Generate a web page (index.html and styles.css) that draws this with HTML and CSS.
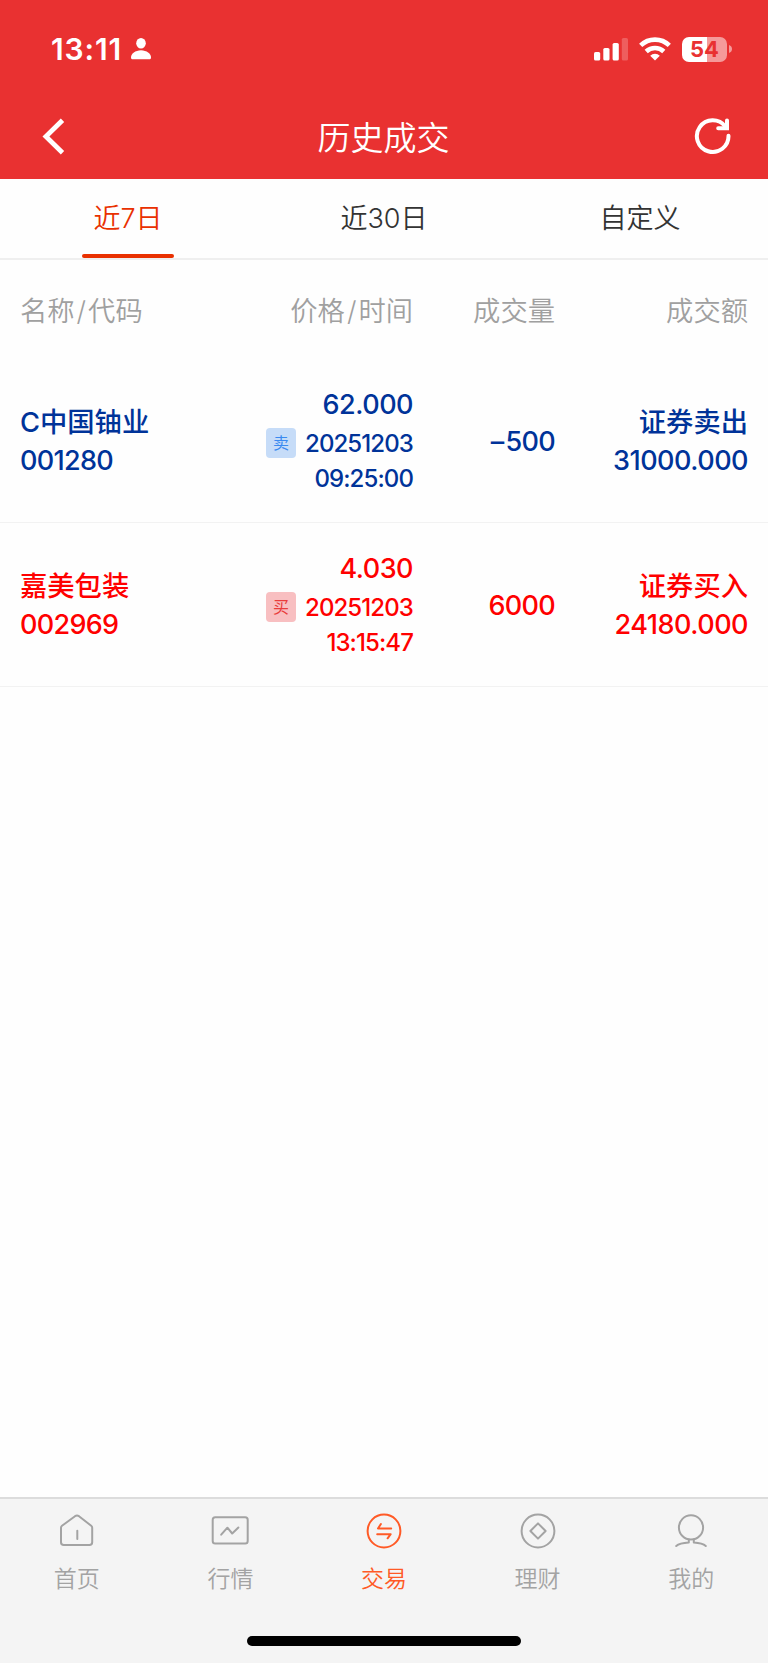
FILE: index.html
```html
<!DOCTYPE html>
<html lang="zh-CN">
<head>
    <meta charset="UTF-8">
    <meta name="viewport" content="width=device-width, initial-scale=1.0">
    <title>历史成交</title>
    <link rel="stylesheet" href="styles.css">
</head>
<body>

    <!-- 顶部 -->
    <header class="header">
        <div class="status-bar">
            <div class="status-left">
                <span class="time">13:11</span>
                <svg class="icon-person" width="20" height="22" viewBox="0 0 20 22" fill="#fff">
                    <ellipse cx="10" cy="5.3" rx="4.8" ry="5.3"/>
                    <path d="M2 21.3C.7 21.3 0 20.7 0 19.4C0 16 4.3 12.3 10 12.3S20 16 20 19.4C20 20.7 19.3 21.3 18 21.3Z"/>
                </svg>
            </div>
            <div class="status-right">
                <svg width="34" height="23" viewBox="0 0 34 23" fill="#fff">
                    <rect x="0" y="14" width="6.2" height="8.5" rx="1.6"/>
                    <rect x="9.3" y="10" width="6.2" height="12.5" rx="1.6"/>
                    <rect x="18.6" y="5" width="6.2" height="17.5" rx="1.6"/>
                    <rect x="27.8" y="0" width="6.2" height="22.5" rx="1.6" opacity=".22"/>
                </svg>
                <svg width="32" height="24" viewBox="0 0 32 24" fill="none" stroke="#fff" stroke-width="4.6">
                    <path d="M1.7 8.4A20.5 20.5 0 0 1 30.3 8.4"/>
                    <path d="M7.2 14.5A12.8 12.8 0 0 1 24.8 14.5"/>
                    <path d="M16 23.5L11.2 18.8A6.8 6.8 0 0 1 20.8 18.8Z" fill="#fff" stroke="none"/>
                </svg>
                <div class="battery">
                    <span class="battery-level">54</span>
                    <svg class="battery-cap" width="3" height="8" viewBox="0 0 3 8"><path d="M0 0Q3 1.2 3 4T0 8Z" fill="#f59a9a"/></svg>
                </div>
            </div>
        </div>
        <div class="title-bar">
            <svg width="24" height="38" viewBox="0 0 24 38" fill="none" stroke="#fff" stroke-width="4.8">
                <path d="M20.5 2.2L3.9 18.5L20.5 34.8"/>
            </svg>
            <h1 class="title">历史成交</h1>
            <svg width="38" height="38" viewBox="0 0 38 38" fill="none" stroke="#fff" stroke-width="4" stroke-linecap="round">
                <path d="M34.5 17.8A15.8 15.8 0 1 1 31.3 8.6"/>
                <path d="M33 2.4V10.2H24.2" stroke-linejoin="miter"/>
            </svg>
        </div>
    </header>

    <!-- 日期切换 -->
    <nav class="tabs">
        <a class="tab active">近7日</a>
        <a class="tab">近30日</a>
        <a class="tab">自定义</a>
    </nav>

    <!-- 成交列表 -->
    <main class="list">
        <div class="row list-head">
            <div>名称<span class="slash">/</span>代码</div>
            <div>价格<span class="slash">/</span>时间</div>
            <div>成交量</div>
            <div>成交额</div>
        </div>

        <div class="row item sell">
            <div class="pair">
                <span class="name">C中国铀业</span>
                <span>001280</span>
            </div>
            <div class="deal">
                <div class="price">62.000</div>
                <div class="date"><span class="tag">卖</span><span>20251203</span></div>
                <div class="clock">09:25:00</div>
            </div>
            <div class="volume"><span class="minus">–</span>500</div>
            <div class="pair">
                <span class="name">证券卖出</span>
                <span class="amount">31000.000</span>
            </div>
        </div>

        <div class="row item buy">
            <div class="pair">
                <span class="name">嘉美包装</span>
                <span>002969</span>
            </div>
            <div class="deal">
                <div class="price">4.030</div>
                <div class="date"><span class="tag">买</span><span>20251203</span></div>
                <div class="clock">13:15:47</div>
            </div>
            <div class="volume">6000</div>
            <div class="pair">
                <span class="name">证券买入</span>
                <span class="amount">24180.000</span>
            </div>
        </div>
    </main>

    <!-- 底部导航 -->
    <footer class="footer">
        <nav class="tabbar">
            <a class="tabbar-item">
                <svg width="36" height="36" viewBox="0 0 36 36">
                    <path d="M2 14.8Q2 13.5 3 12.7L16 3.2Q18 2 20 3.2L32.2 12.7Q33.2 13.5 33.2 14.8V29.2Q33.2 32 30.4 32H4.8Q2 32 2 29.2Z"/>
                    <path d="M18.3 17.8V26"/>
                </svg>
                <span>首页</span>
            </a>
            <a class="tabbar-item">
                <svg width="38" height="36" viewBox="0 0 38 36">
                    <rect x="1.7" y="4.2" width="35" height="26.3" rx="2.5"/>
                    <path d="M10.2 21.7L16.4 14.7L21.2 20.5L27.4 14.5"/>
                </svg>
                <span>行情</span>
            </a>
            <a class="tabbar-item active">
                <svg width="36" height="36" viewBox="0 0 36 36">
                    <circle cx="18" cy="18" r="16.4"/>
                    <path d="M14.9 11L12 15.5H25.2M11.2 21.2H24.7L21.6 25.3"/>
                </svg>
                <span>交易</span>
            </a>
            <a class="tabbar-item">
                <svg width="36" height="36" viewBox="0 0 36 36">
                    <circle cx="18" cy="18" r="16.4"/>
                    <path d="M18 10.4L25.6 18L18 25.6L10.4 18Z"/>
                </svg>
                <span>理财</span>
            </a>
            <a class="tabbar-item">
                <svg width="36" height="36" viewBox="0 0 36 36">
                    <circle cx="18" cy="14.4" r="12.1"/>
                    <path d="M15.8 26.5V29.5Q6.5 30 3.2 33M20.8 26.5V29.5Q29.5 30 32.8 33"/>
                </svg>
                <span>我的</span>
            </a>
        </nav>
        <div class="home-indicator"></div>
    </footer>

</body>
</html>
```
FILE: styles.css
```css
* {
    box-sizing: border-box;
}

body {
    margin: 0;
    min-height: 1663px;
    display: flex;
    flex-direction: column;
    background-color: #fefefe;
    color: #333;
    font-family: Inter, "Noto Sans CJK SC", sans-serif;
}

svg {
    display: block;
    flex: none;
}

/* 顶部 */
.header {
    height: 179px;
    background-color: #e93131;
    color: #fff;
}

.status-bar {
    height: 98px;
    padding: 0 36px 0 51px;
    display: flex;
    justify-content: space-between;
    align-items: center;
}

.status-left {
    display: flex;
    align-items: center;
    gap: 9px;
}

.time {
    font-size: 30px;
    font-weight: 600;
    line-height: 36px;
    letter-spacing: 0.9px;
}

.status-right {
    display: flex;
    align-items: center;
    gap: 11px;
}

.battery {
    display: flex;
    align-items: center;
    gap: 2px;
}

.battery-level {
    width: 45px;
    height: 25px;
    border-radius: 7px;
    background: linear-gradient(to right, #fff 55%, #f59a9a 55%);
    color: #e93131;
    font-size: 22px;
    font-weight: 700;
    line-height: 25px;
    text-align: center;
}

.title-bar {
    height: 78px;
    padding: 0 36px 0 42px;
    display: flex;
    justify-content: space-between;
    align-items: center;
}

.title {
    margin: 1px 0 0 7px;
    font-size: 33px;
    font-weight: 350;
    line-height: 40px;
}

/* 日期切换 */
.tabs {
    height: 81px;
    display: flex;
    border-bottom: 2px solid #efefef;
}

.tab {
    flex: 1;
    display: flex;
    flex-direction: column;
    align-items: center;
    justify-content: space-between;
    padding-top: 20px;
    font-size: 27px;
    font-weight: 350;
    line-height: 40px;
}

.tab.active {
    color: #e93000;
}

.tab.active::after {
    content: "";
    width: 92px;
    height: 4px;
    border-radius: 2px;
    background-color: #e93000;
}

/* 成交列表 */
.list {
    flex: 1;
}

.row {
    display: grid;
    grid-template-columns: 201px 192px 142px 1fr;
    align-items: center;
    padding: 0 20px;
    text-align: right;
}

.row > :first-child {
    text-align: left;
}

.list-head {
    height: 99px;
    padding-bottom: 2px;
    color: #a0a0a0;
    font-size: 27.3px;
    font-weight: 350;
}

.slash {
    margin: 0 2px;
}

.item {
    height: 164px;
    border-bottom: 1px solid #f2f2f2;
    font-size: 27px;
    font-weight: 500;
    letter-spacing: -0.7px;
}

.sell {
    color: #003399;
}

.buy {
    color: #ff0000;
}

.pair {
    display: flex;
    flex-direction: column;
    padding-top: 3px;
    line-height: 38px;
}

.name {
    font-size: 27.3px;
    letter-spacing: 0;
}

.price {
    line-height: 38px;
    letter-spacing: -0.5px;
}

.date {
    display: flex;
    align-items: center;
    justify-content: flex-end;
    gap: 9px;
    padding-top: 1px;
    font-size: 24px;
    line-height: 38px;
    letter-spacing: -0.9px;
}

.clock {
    font-size: 24px;
    line-height: 32px;
    letter-spacing: -0.9px;
}

.volume {
    padding-top: 2px;
}

.minus {
    margin-right: 2px;
}

.amount {
    letter-spacing: -0.5px;
}

.tag {
    width: 30px;
    height: 30px;
    margin-bottom: 3px;
    border-radius: 4px;
    font-size: 16px;
    font-weight: 400;
    line-height: 30px;
    letter-spacing: 0;
    text-align: center;
}

.sell .tag {
    background-color: #c6dcf8;
    color: #3a8af0;
}

.buy .tag {
    background-color: #f8bfc1;
    color: #e93c3c;
}

/* 底部导航 */
.footer {
    height: 166px;
    border-top: 2px solid #dcdcdc;
    background-color: #f4f4f4;
    display: flex;
    flex-direction: column;
    justify-content: space-between;
    align-items: center;
    padding-bottom: 17px;
}

.tabbar {
    width: 100%;
    display: flex;
    padding-top: 14px;
}

.tabbar-item {
    flex: 1;
    display: flex;
    flex-direction: column;
    align-items: center;
    gap: 13px;
    color: #a3a3a3;
    font-size: 23px;
    font-weight: 350;
    line-height: 34px;
}

.tabbar-item svg {
    fill: none;
    stroke: currentColor;
    stroke-width: 2;
    stroke-linecap: round;
    stroke-linejoin: round;
}

.tabbar-item.active {
    color: #ff5a26;
}

.home-indicator {
    width: 274px;
    height: 10px;
    border-radius: 5px;
    background-color: #000;
}
```
